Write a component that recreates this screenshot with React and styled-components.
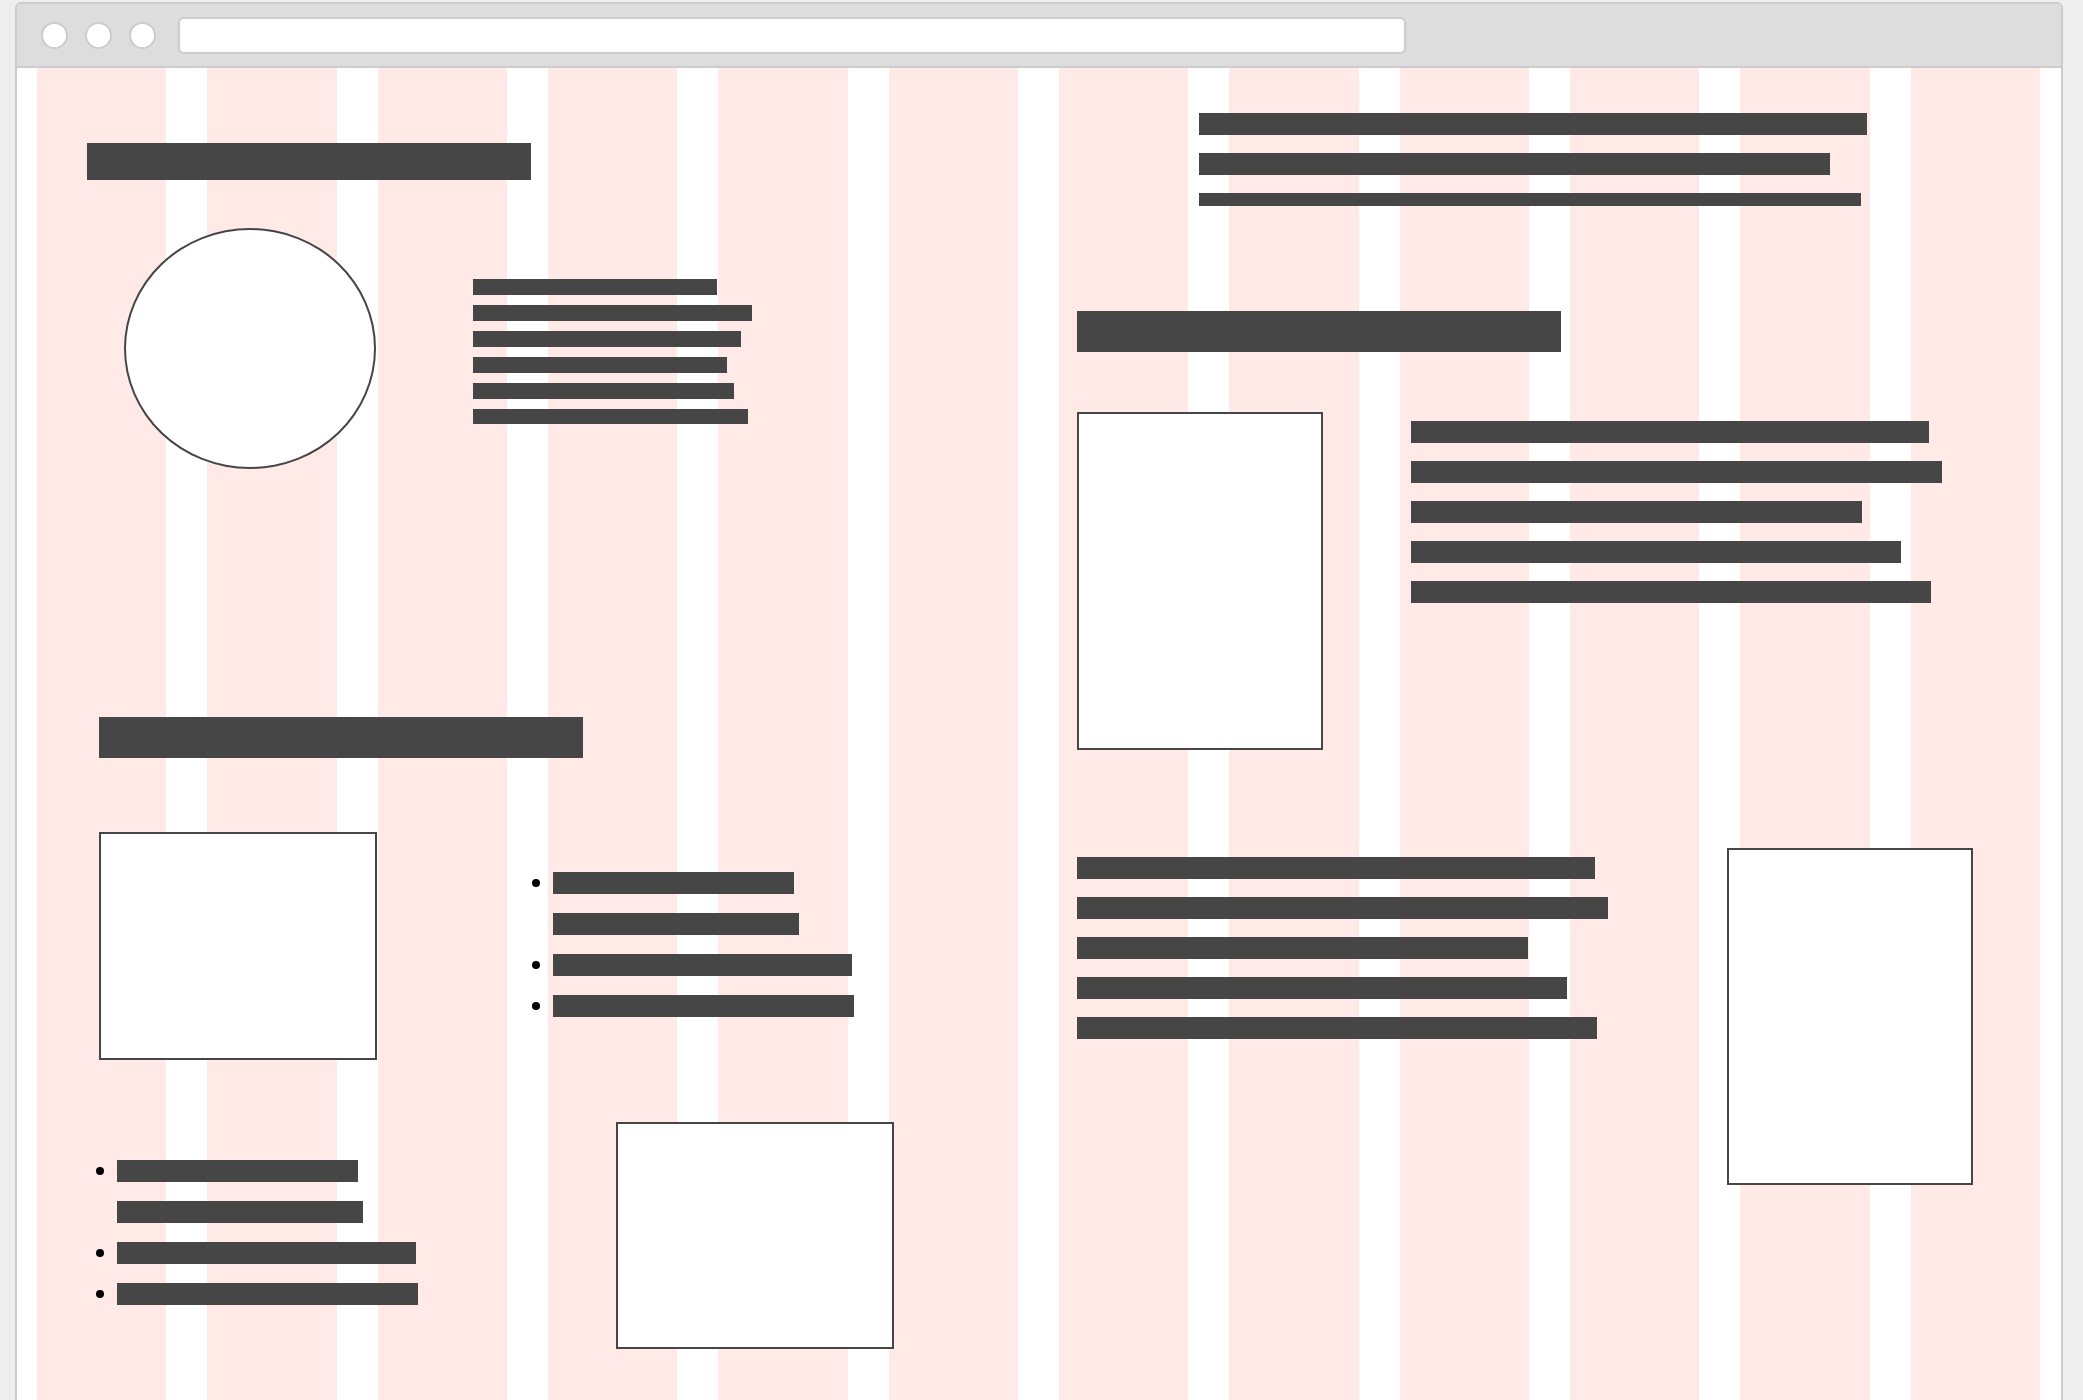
import React from "react";
import styled, { createGlobalStyle } from "styled-components";

const GlobalStyle = createGlobalStyle`
  html, body {
    margin: 0;
    padding: 0;
    background: #eeeeee;
    overflow: hidden;
  }
  body {
    font-family: "Liberation Sans", Arial, sans-serif;
  }
`;

const INK = "#464646";

const Page = styled.div`
  padding: 2px 0 0 15px;
  min-height: 100vh;
  box-sizing: border-box;
`;

const Window = styled.div`
  width: 2048px;
  box-sizing: border-box;
  border: 2px solid #cccccc;
  border-bottom: none;
  border-radius: 6px 6px 0 0;
  background: #ffffff;
  overflow: hidden;
`;

const Toolbar = styled.div`
  display: flex;
  align-items: center;
  height: 62px;
  padding-left: 24px;
  background: #dddddd;
  border-bottom: 2px solid #cccccc;
`;

const Light = styled.span`
  width: 27px;
  height: 27px;
  box-sizing: border-box;
  border: 2px solid #cccccc;
  border-radius: 50%;
  background: #ffffff;
  & + & {
    margin-left: 17px;
  }
`;

const AddressBar = styled.div`
  margin-left: 22px;
  width: 1228px;
  height: 37px;
  box-sizing: border-box;
  border: 2px solid #cccccc;
  border-radius: 6px;
  background: #ffffff;
`;

const Viewport = styled.div`
  position: relative;
  min-height: 1332px;
  display: grid;
  grid-template-columns: 1042px 1fr;
`;

// 12 column grid guide painted under the wireframe
const GridGuide = styled.div`
  position: absolute;
  inset: 0;
  display: grid;
  grid-template-columns: repeat(12, 1fr);
  column-gap: 41px;
  padding: 0 21px 0 20px;
  pointer-events: none;
`;

const GuideColumn = styled.div`
  background: #ffeae8;
`;

const Pane = styled.div`
  position: relative;
  display: flex;
  flex-direction: column;
  align-items: flex-start;
`;

const Heading = styled.div`
  width: ${(p) => p.$w}px;
  height: ${(p) => p.$h}px;
  background: ${INK};
  margin-top: ${(p) => p.$top}px;
  margin-left: ${(p) => p.$left}px;
`;

const Row = styled.div`
  display: flex;
  align-items: flex-start;
  gap: ${(p) => p.$gap}px;
  margin-top: ${(p) => p.$top}px;
  padding-left: ${(p) => p.$left}px;
`;

const Lines = styled.div`
  display: flex;
  flex-direction: column;
  gap: ${(p) => p.$gap}px;
  margin-top: ${(p) => p.$top || 0}px;
  padding-left: ${(p) => p.$left || 0}px;
  width: ${(p) => (p.$width ? `${p.$width}px` : "auto")};
`;

const Line = styled.div`
  width: ${(p) => p.$w}px;
  height: ${(p) => p.$h}px;
  background: ${INK};
`;

const Portrait = styled.div`
  width: 252px;
  height: 241px;
  box-sizing: border-box;
  border: 2px solid ${INK};
  border-radius: 50%;
  background: #ffffff;
`;

const Picture = styled.div`
  flex: none;
  width: ${(p) => p.$w}px;
  height: ${(p) => p.$h}px;
  box-sizing: border-box;
  border: 2px solid ${INK};
  background: #ffffff;
`;

const BulletList = styled.ul`
  list-style: none;
  margin: ${(p) => p.$top}px 0 0;
  padding: 0;
  display: flex;
  flex-direction: column;
  gap: 19px;
  width: ${(p) => p.$width}px;
`;

const BulletItem = styled.li`
  display: flex;
  gap: 13px;
  &::before {
    content: "";
    flex: 0 0 8px;
    height: 8px;
    margin-top: 7px;
    border-radius: 50%;
    background: #000000;
  }
`;

const ItemLines = styled.div`
  display: flex;
  flex-direction: column;
  gap: 19px;
`;

const ellipseText = [244, 279, 268, 254, 261, 275];
const sideText = [518, 531, 451, 490, 520];

function WireList({ top, width }) {
  return (
    <BulletList $top={top} $width={width}>
      <BulletItem>
        <ItemLines>
          <Line $w={241} $h={22} />
          <Line $w={246} $h={22} />
        </ItemLines>
      </BulletItem>
      <BulletItem>
        <ItemLines>
          <Line $w={299} $h={22} />
        </ItemLines>
      </BulletItem>
      <BulletItem>
        <ItemLines>
          <Line $w={301} $h={22} />
        </ItemLines>
      </BulletItem>
    </BulletList>
  );
}

export default function App() {
  return (
    <Page>
      <GlobalStyle />
      <Window>
        <Toolbar>
          <Light />
          <Light />
          <Light />
          <AddressBar />
        </Toolbar>
        <Viewport>
          <GridGuide>
            {Array.from({ length: 12 }, (_, i) => (
              <GuideColumn key={i} />
            ))}
          </GridGuide>

          <Pane>
            <Heading $w={444} $h={37} $top={75} $left={70} />
            <Row $top={48} $left={107} $gap={97}>
              <Portrait />
              <Lines $gap={10} $top={51}>
                {ellipseText.map((w, i) => (
                  <Line key={i} $w={w} $h={i === 5 ? 15 : 16} />
                ))}
              </Lines>
            </Row>

            <Heading $w={484} $h={41} $top={248} $left={82} />
            <Row $top={74} $left={82} $gap={155}>
              <Picture $w={278} $h={228} />
              <WireList top={40} width={322} />
            </Row>
            <Row $top={62} $left={79} $gap={198}>
              <WireList top={38} width={322} />
              <Picture $w={278} $h={227} />
            </Row>
          </Pane>

          <Pane>
            <Lines $gap={18} $top={45} $left={140}>
              <Line $w={668} $h={22} />
              <Line $w={631} $h={22} />
              <Line $w={662} $h={13} />
            </Lines>
            <Heading $w={484} $h={41} $top={105} $left={18} />
            <Row $top={60} $left={18} $gap={88}>
              <Picture $w={246} $h={338} />
              <Lines $gap={18} $top={9}>
                {sideText.map((w, i) => (
                  <Line key={i} $w={w} $h={22} />
                ))}
              </Lines>
            </Row>
            <Row $top={98} $left={18} $gap={119}>
              <Lines $gap={18} $top={9} $width={531}>
                {sideText.map((w, i) => (
                  <Line key={i} $w={w} $h={22} />
                ))}
              </Lines>
              <Picture $w={246} $h={337} />
            </Row>
          </Pane>
        </Viewport>
      </Window>
    </Page>
  );
}
